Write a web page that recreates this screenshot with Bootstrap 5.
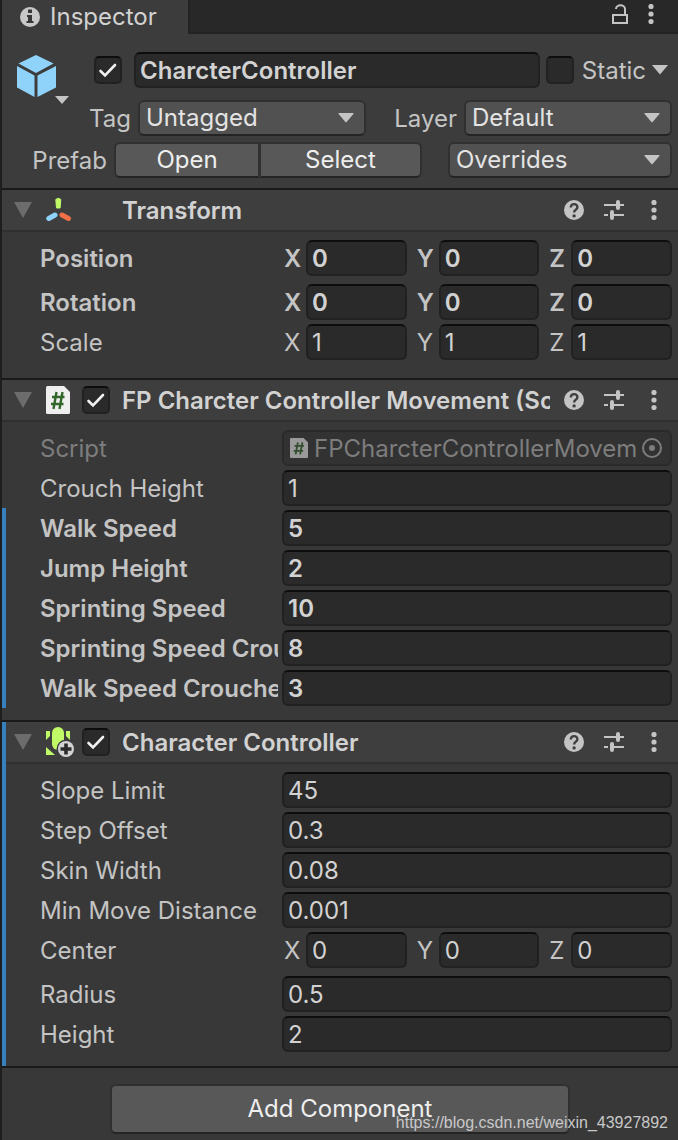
<!DOCTYPE html>
<html lang="en">
<head>
<meta charset="utf-8">
<meta name="viewport" content="width=device-width, initial-scale=1">
<title>Inspector</title>
<link href="https://cdn.jsdelivr.net/npm/bootstrap@5.3.0/dist/css/bootstrap.min.css" rel="stylesheet">
<style>
  body { background: #383838; color: #c4c4c4; font-family: Inter, "Liberation Sans", sans-serif; font-size: 24px; line-height: 32px; }
  .inspector { position: relative; min-height: 100vh; border-left: 2px solid #1e1e1e; padding-bottom: 8px; overflow: hidden; }
  svg { display: block; flex: none; }
  .icon-btn { padding: 0; border: 0; background: none; color: #c4c4c4; line-height: 0; }

  /* Tab bar */
  .tabbar { height: 34px; background: #282828; border-bottom: 2px solid #232323; }
  .tab-active { height: 34px; width: 188px; padding-left: 18px; gap: 10px; background: #3c3c3c; border-right: 2px solid #232323; color: #d2d2d2; }
  .tab-tools { gap: 20px; padding: 0 24px 4px 0; }

  /* Controls */
  .field { height: 36px; min-width: 0; width: 100%; padding: 0 4px; background: #2a2a2a; border: 2px solid #212121; border-top-color: #0d0d0d; border-radius: 6px; color: #d2d2d2; outline: 0; }
  .field:focus { border-color: #3a79bb; }
  .tick { width: 28px; height: 28px; margin: 0; flex: none; border: 2px solid #212121; border-top-color: #0d0d0d; background-color: #2a2a2a; }
  .tick[type=checkbox] { border-radius: 5px; }
  .tick:checked { background-color: #2a2a2a; border-color: #0d0d0d #212121 #212121; background-size: 24px 24px;
    background-image: url("data:image/svg+xml,%3Csvg xmlns='http://www.w3.org/2000/svg' viewBox='0 0 24 24'%3E%3Cpath d='M4.500 13L9 17.500L19 7' fill='none' stroke='%23f0f0f0' stroke-width='2.600' stroke-linecap='round'/%3E%3C/svg%3E"); }
  .picker { height: 36px; min-width: 0; padding: 0 28px 0 6px; line-height: 32px; appearance: none; color: #e4e4e4; border: 2px solid #303030; border-bottom-color: #242424; border-radius: 6px; font-size: 24px;
    background: #515151 url("data:image/svg+xml,%3Csvg xmlns='http://www.w3.org/2000/svg' viewBox='0 0 16 10'%3E%3Cpath d='M1 0H15Q16 0 15.400 1L8.600 9Q8 9.600 7.400 9L.600 1Q0 0 1 0' fill='%23c4c4c4'/%3E%3C/svg%3E") no-repeat right 10px center / 16px 10px; }
  .push { --bs-btn-color: #eee; --bs-btn-bg: #585858; --bs-btn-hover-color: #eee; --bs-btn-hover-bg: #676767; --bs-btn-border-color: #303030; --bs-btn-hover-border-color: #303030; --bs-btn-border-width: 2px; --bs-btn-padding-y: 0; --bs-btn-padding-x: 8px; --bs-btn-border-radius: 6px; --bs-btn-font-size: 24px; --bs-btn-line-height: 30px; border-bottom-color: #242424; }

  /* Object header */
  .object-head { background: #3c3c3c; padding: 18px 6px 10px 14px; }
  .object-top { height: 48px; }
  .object-icon { width: 54px; padding-top: 2px; }
  .head-row { height: 36px; }
  .head-row label { padding-top: 2px; }
  .active-tick { margin: 0 12px 0 24px; }
  .static-tick { margin: 0 8px 0 6px; }
  .static-more { padding: 0 4px 0 6px; }
  .tag-label { width: 116px; margin-right: 8px; padding-right: 2px; }
  .tag-label, .layer-label, .prefab-label { text-align: right; padding-top: 2px; }
  .tag-label, .layer-label, .prefab-label { margin-right: 6px; padding-right: 1px; }
  .tag-picker { flex: 190 1 0; }
  .layer-label { width: 92px; }
  .layer-picker { flex: 170 1 0; }
  .prefab-row { margin-top: 6px; }
  .prefab-label { width: 92px; }
  .prefab-buttons { width: 308px; height: 36px; }
  .prefab-buttons .push:first-child { flex: 0 0 146px; }
  .override-picker { width: 224px; }

  /* Components */
  .component { border-top: 2px solid #1a1a1a; }
  .component-head { display: grid; grid-template-columns: 32px 36px 40px minmax(0, 1fr) auto; align-items: center; height: 42px; padding: 0 14px 0 12px; background: #3e3e3e; border-bottom: 2px solid #303030; }
  .component-title { grid-column: 4; font-size: 24px; line-height: 32px; padding-top: 2px; font-weight: 600; color: #d2d2d2; margin: 0; white-space: nowrap; overflow: hidden; }
  .tools { gap: 20px; padding-left: 14px; }
  .menu-btn { width: 20px; padding: 0 7px; }
  .props { padding: 8px 6px 14px 38px; display: grid; row-gap: 4px; }
  .prop { display: grid; grid-template-columns: 238px minmax(0, 1fr); column-gap: 4px; align-items: center; }
  .prop > label, .prop > .caption { padding-top: 2px; white-space: nowrap; overflow: hidden; }
  .xyz { display: grid; grid-template-columns: repeat(3, minmax(0, 1fr)); column-gap: 8px; }
  .xyz label { display: flex; align-items: center; padding-left: 2px; }
  .xyz label span { width: 22px; flex: none; padding-top: 2px; }
  .spaced { margin-bottom: 4px; }
  .changed, .changed .field { font-weight: 600; }
  .faded { color: #7d7d7d; }
  .object-field { height: 36px; padding: 0 8px 0 6px; background: #323232; border: 2px solid #2a2a2a; border-radius: 6px; gap: 6px; }
  .object-field input { min-width: 0; flex: 1; padding: 2px 0 0; border: 0; background: none; color: #7d7d7d; }
  .marks { display: grid; row-gap: 4px; margin: -2px 0 -2px -38px; padding: 2px 0 2px 34px; border-left: 4px solid #3580bd; }
  .added { position: relative; }
  .added::before { content: ""; position: absolute; left: 0; top: 0; bottom: 0; width: 4px; background: #3580bd; }
  .add-area { border-top: 2px solid #1a1a1a; padding-top: 16px; }
  .add-button { width: 460px; max-width: 90%; height: 50px; }
  .watermark { position: absolute; right: 10px; bottom: 9px; font: 16px/20px "Liberation Sans", sans-serif; color: #c8c8c8; text-decoration: none; }
</style>
</head>
<body>
<svg class="d-none" aria-hidden="true">
  <symbol id="i-fold" viewBox="0 0 18 16"><path d="M0 0H18L9 16Z" fill="#6c6c6c"/></symbol>
  <symbol id="i-dots" viewBox="0 0 6 20"><g fill="currentColor"><circle cx="3" cy="2.500" r="2.600"/><circle cx="3" cy="10" r="2.600"/><circle cx="3" cy="17.500" r="2.600"/></g></symbol>
  <symbol id="i-help" viewBox="0 0 20 20"><circle cx="10" cy="10" r="10" fill="currentColor"/><path d="M6.800 7.600C6.800 2.900 13.400 3.200 13.400 7.200C13.400 9.700 10.100 9.700 10.100 12.600" fill="none" stroke="#3e3e3e" stroke-width="2.400"/><circle cx="10.100" cy="15.900" r="1.700" fill="#3e3e3e"/></symbol>
  <symbol id="i-preset" viewBox="0 0 20 20"><path d="M0 5H12M16 5H20M0 15H4M8 15H20" stroke="currentColor" stroke-width="2"/><path d="M14 2V8M8 12V18" stroke="currentColor" stroke-width="4" stroke-linecap="round"/></symbol>
  <symbol id="i-script" viewBox="0 0 24 28"><path d="M1.500 0H18L24 6V26.500Q24 28 22.500 28H1.500Q0 28 0 26.500V1.500Q0 0 1.500 0Z" fill="#efefef"/><path d="M10.500 6L7.500 23M16.500 6L13.500 23M6 11H18.500M5 18H17.500" stroke="#32662b" stroke-width="2.400" fill="none"/></symbol>
</svg>

<main class="inspector">
  <header class="tabbar d-flex align-items-start">
    <div class="tab-active d-flex align-items-center">
      <svg width="20" height="20" viewBox="0 0 20 20"><circle cx="10" cy="10" r="10" fill="#c8c8c8"/><path d="M8 2.500H12V6H8ZM7 8H12V14H13.500V16H6.500V14H8V10H7Z" fill="#383838"/></svg>
      <span>Inspector</span>
    </div>
    <div class="d-flex ms-auto align-items-center h-100 tab-tools">
      <button class="icon-btn" aria-label="Lock"><svg width="16" height="20" viewBox="0 0 16 20"><path d="M1 11H15V19H1Z M4 5C4 0 13 0 13 5V11" fill="none" stroke="currentColor" stroke-width="2"/></svg></button>
      <button class="icon-btn" aria-label="Tab menu"><svg width="6" height="20"><use href="#i-dots"/></svg></button>
    </div>
  </header>

  <section class="object-head">
    <div class="d-flex object-top">
      <div class="object-icon">
        <svg width="54" height="50" viewBox="0 0 54 50"><path d="M20 1L37.500 9.500L20 19L2.500 9.500ZM1 12L18.500 21.500V43L1 33.500ZM40 12L21.500 21.500V43L40 33.500Z" fill="#8fd3fb"/><path d="M39 42H53L46 50Z" fill="#c4c4c4"/></svg>
      </div>
      <div class="head-row d-flex align-items-center flex-grow-1">
        <input class="form-check-input tick active-tick" type="checkbox" checked aria-label="Active">
        <input class="field flex-fill w-auto fw-semibold" value="CharcterController" aria-label="Object name">
        <input class="form-check-input tick static-tick" type="checkbox" id="static">
        <label for="static">Static</label>
        <button class="icon-btn static-more" aria-label="Static flags"><svg width="16" height="10" viewBox="0 0 16 10"><path d="M0 0H16L8 9.500Z" fill="currentColor"/></svg></button>
      </div>
    </div>
    <div class="d-flex align-items-center">
      <label for="tag" class="tag-label">Tag</label>
      <select id="tag" class="picker tag-picker"><option>Untagged</option></select>
      <label for="layer" class="layer-label">Layer</label>
      <select id="layer" class="picker layer-picker"><option>Default</option></select>
    </div>
    <div class="d-flex align-items-center prefab-row">
      <span class="prefab-label">Prefab</span>
      <div class="btn-group prefab-buttons">
        <button class="btn push">Open</button><button class="btn push">Select</button>
      </div>
      <select class="picker override-picker ms-auto" aria-label="Overrides"><option>Overrides</option></select>
    </div>
  </section>

  <section class="component">
    <div class="component-head">
      <svg width="18" height="16"><use href="#i-fold"/></svg>
      <svg width="28" height="28" viewBox="0 0 28 28"><path d="M9.800 3.500Q12.300 1 14.800 3.500L14.100 12H10.500Z" fill="#c0fb67" stroke="#c0fb67"/><path d="M9 19L2.800 22.500" stroke="#8fd3fb" stroke-width="5" stroke-linecap="round"/><path d="M16 19L22.500 22.500" stroke="#f27048" stroke-width="5" stroke-linecap="round"/></svg>
      <h2 class="component-title">Transform</h2>
      <div class="tools d-flex align-items-center">
        <button class="icon-btn" aria-label="Help"><svg width="20" height="20"><use href="#i-help"/></svg></button>
        <button class="icon-btn" aria-label="Presets"><svg width="20" height="20"><use href="#i-preset"/></svg></button>
        <button class="icon-btn menu-btn" aria-label="Menu"><svg width="6" height="20"><use href="#i-dots"/></svg></button>
      </div>
    </div>
    <div class="props">
      <div class="prop changed spaced"><span class="caption">Position</span>
        <div class="xyz"><label><span>X</span><input class="field" value="0"></label><label><span>Y</span><input class="field" value="0"></label><label><span>Z</span><input class="field" value="0"></label></div></div>
      <div class="prop changed"><span class="caption">Rotation</span>
        <div class="xyz"><label><span>X</span><input class="field" value="0"></label><label><span>Y</span><input class="field" value="0"></label><label><span>Z</span><input class="field" value="0"></label></div></div>
      <div class="prop spaced"><span class="caption">Scale</span>
        <div class="xyz"><label><span>X</span><input class="field" value="1"></label><label><span>Y</span><input class="field" value="1"></label><label><span>Z</span><input class="field" value="1"></label></div></div>
    </div>
  </section>

  <section class="component">
    <div class="component-head">
      <svg width="18" height="16"><use href="#i-fold"/></svg>
      <svg width="24" height="28"><use href="#i-script"/></svg>
      <input class="form-check-input tick" type="checkbox" checked aria-label="Enable movement script">
      <h2 class="component-title">FP Charcter Controller Movement (Script)</h2>
      <div class="tools d-flex align-items-center">
        <button class="icon-btn" aria-label="Help"><svg width="20" height="20"><use href="#i-help"/></svg></button>
        <button class="icon-btn" aria-label="Presets"><svg width="20" height="20"><use href="#i-preset"/></svg></button>
        <button class="icon-btn menu-btn" aria-label="Menu"><svg width="6" height="20"><use href="#i-dots"/></svg></button>
      </div>
    </div>
    <div class="props">
      <div class="prop faded"><label for="script">Script</label>
        <div class="object-field d-flex align-items-center">
          <svg width="18" height="20" viewBox="0 0 24 28" preserveAspectRatio="none" opacity=".55"><use href="#i-script" width="24" height="28"/></svg>
          <input id="script" disabled value="FPCharcterControllerMovement">
          <svg width="20" height="20" viewBox="0 0 20 20"><circle cx="10" cy="10" r="9" fill="none" stroke="#7d7d7d" stroke-width="2"/><circle cx="10" cy="10" r="3" fill="#7d7d7d"/></svg>
        </div></div>
      <div class="prop"><label for="crouch">Crouch Height</label><input id="crouch" class="field" value="1"></div>
      <div class="marks">
        <div class="prop changed"><label for="walk">Walk Speed</label><input id="walk" class="field" value="5"></div>
        <div class="prop changed"><label for="jump">Jump Height</label><input id="jump" class="field" value="2"></div>
        <div class="prop changed"><label for="sprint">Sprinting Speed</label><input id="sprint" class="field" value="10"></div>
        <div class="prop changed"><label for="sprintc">Sprinting Speed Crouched</label><input id="sprintc" class="field" value="8"></div>
        <div class="prop changed"><label for="walkc">Walk Speed Crouched</label><input id="walkc" class="field" value="3"></div>
      </div>
    </div>
  </section>

  <section class="component added">
    <div class="component-head">
      <svg width="18" height="16"><use href="#i-fold"/></svg>
      <svg width="28" height="30" viewBox="0 0 28 30"><g fill="#c0fb67"><rect x="6" y="0" width="12" height="23" rx="6"/><path d="M0 4H4V9L0 13ZM24 4H20V9L24 13ZM0 20L9 28H0Z"/></g><circle cx="20" cy="22" r="9.500" fill="#3e3e3e"/><circle cx="20" cy="22" r="8" fill="#d4d4d4"/><path d="M20 16.500V27.500M14.500 22H25.500" stroke="#2c2c2c" stroke-width="3.600"/></svg>
      <input class="form-check-input tick" type="checkbox" checked aria-label="Enable Character Controller">
      <h2 class="component-title">Character Controller</h2>
      <div class="tools d-flex align-items-center">
        <button class="icon-btn" aria-label="Help"><svg width="20" height="20"><use href="#i-help"/></svg></button>
        <button class="icon-btn" aria-label="Presets"><svg width="20" height="20"><use href="#i-preset"/></svg></button>
        <button class="icon-btn menu-btn" aria-label="Menu"><svg width="6" height="20"><use href="#i-dots"/></svg></button>
      </div>
    </div>
    <div class="props">
      <div class="prop"><label for="slope">Slope Limit</label><input id="slope" class="field" value="45"></div>
      <div class="prop"><label for="step">Step Offset</label><input id="step" class="field" value="0.3"></div>
      <div class="prop"><label for="skin">Skin Width</label><input id="skin" class="field" value="0.08"></div>
      <div class="prop"><label for="minmove">Min Move Distance</label><input id="minmove" class="field" value="0.001"></div>
      <div class="prop spaced"><span class="caption">Center</span>
        <div class="xyz"><label><span>X</span><input class="field" value="0"></label><label><span>Y</span><input class="field" value="0"></label><label><span>Z</span><input class="field" value="0"></label></div></div>
      <div class="prop"><label for="radius">Radius</label><input id="radius" class="field" value="0.5"></div>
      <div class="prop"><label for="height">Height</label><input id="height" class="field" value="2"></div>
    </div>
  </section>

  <div class="add-area text-center"><button class="btn push add-button">Add Component</button></div>
  <a class="watermark" href="#">https://blog.csdn.net/weixin_43927892</a>
</main>
<script src="https://cdn.jsdelivr.net/npm/bootstrap@5.3.0/dist/js/bootstrap.bundle.min.js"></script>
</body>
</html>
